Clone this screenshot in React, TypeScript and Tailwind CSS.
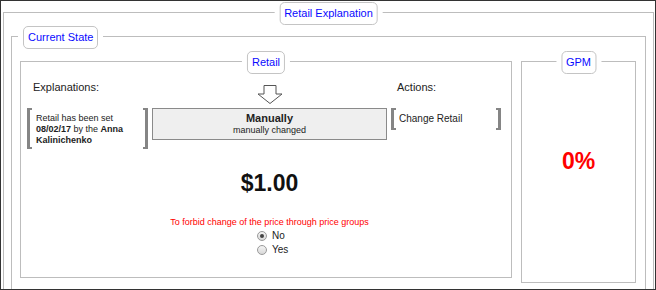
import React from 'react'

const font = "font-['Liberation_Sans',Arial,sans-serif]"

function Legend({
  children,
  className,
}: {
  children: React.ReactNode
  className: string
}) {
  return (
    <div className={`absolute top-[-11px] bg-white px-[5px] ${className}`}>
      <div className="flex h-[23px] items-center rounded-[5px] border border-[#c4c4c4] bg-white px-[4px] text-[11px] leading-none text-[#0a0aff]">
        {children}
      </div>
    </div>
  )
}

function Bracket({ side }: { side: 'left' | 'right' }) {
  return (
    <div
      className={`w-[5px] shrink-0 self-stretch border-y-[2px] border-[#858585] ${
        side === 'left' ? 'border-l-[3px]' : 'border-r-[3px]'
      }`}
    />
  )
}

function DownArrow() {
  return (
    <svg
      width="26"
      height="21"
      viewBox="0 0 26 21"
      className="mt-[3px]">
      <path
        d="M7 1.5 H19 V10 H25 L13 19.5 L1 10 H7 Z"
        fill="#fff"
        stroke="#555"
        strokeWidth="1"
        strokeLinejoin="miter"
      />
    </svg>
  )
}

function Radio({ checked, label }: { checked?: boolean; label: string }) {
  return (
    <div className="flex h-[14px] items-center gap-[5px]">
      <span className="flex h-[10px] w-[10px] items-center justify-center rounded-full border border-[#9a9a9a] bg-gradient-to-b from-[#f4f4f4] to-[#d8d8d8]">
        {checked && <span className="h-[4px] w-[4px] rounded-full bg-[#444]" />}
      </span>
      <span className="text-[10px] leading-none text-[#222]">{label}</span>
    </div>
  )
}

export default function App() {
  return (
    <div
      className={`h-[290px] w-[656px] overflow-hidden border border-[#333] bg-white ${font}`}>
      {/* Retail Explanation */}
      <div className="relative ml-[2px] mr-[1px] mt-[11px] border border-[#bdbdbd] pb-[10px]">
        <Legend className="left-1/2 -translate-x-1/2">Retail Explanation</Legend>

        {/* Current State */}
        <div className="relative ml-[7px] mr-[7px] mt-[23px] border border-[#bdbdbd] pb-[20px]">
          <Legend className="left-[6px]">Current State</Legend>

          <div className="ml-[8px] mr-[9px] mt-[24px] flex items-start gap-[9px]">
            {/* Retail */}
            <div className="relative h-[217px] w-[492px] shrink-0 border border-[#bdbdbd]">
              <Legend className="left-1/2 -translate-x-1/2">Retail</Legend>

              <div className="ml-[6px] mt-[19px] flex h-[27px] items-start gap-[4px]">
                <div className="w-[121px] pl-[6px] text-[11px] leading-[13px] text-[#222]">
                  Explanations:
                </div>
                <div className="flex w-[235px] justify-center">
                  <DownArrow />
                </div>
                <div className="w-[110px] pl-[6px] text-[11px] leading-[13px] text-[#222]">
                  Actions:
                </div>
              </div>

              <div className="ml-[6px] flex items-start gap-[4px]">
                <div className="flex h-[41px] w-[121px]">
                  <Bracket side="left" />
                  <div className="flex-1 self-center pl-[4px] pt-[1px] text-[9px] leading-[11px] text-[#222]">
                    Retail has been set <b>08/02/17</b> by the{' '}
                    <b>Anna Kalinichenko</b>
                  </div>
                  <Bracket side="right" />
                </div>
                <div className="flex h-[32px] w-[235px] flex-col items-center justify-center border border-[#8a8a8a] bg-[#efefef] text-[#222]">
                  <div className="text-[11px] font-bold leading-[13px]">
                    Manually
                  </div>
                  <div className="text-[9px] leading-[11px]">
                    manually changed
                  </div>
                </div>
                <div className="flex h-[22px] w-[110px]">
                  <Bracket side="left" />
                  <div className="flex-1 self-center pl-[3px] text-[10px] leading-[12px] text-[#222]">
                    Change Retail
                  </div>
                  <Bracket side="right" />
                </div>
              </div>

              <div className="ml-[131px] mt-[23px] w-[235px]">
                <div className="text-center text-[23px] font-bold leading-[23px] text-[#111]">
                  $1.00
                </div>
                <div className="mt-[22px] text-center text-[9px] leading-[11px] text-[#ff0000]">
                  To forbid change of the price through price groups
                </div>
                <div className="ml-[105px] mt-[1px] flex flex-col">
                  <Radio checked label="No" />
                  <Radio label="Yes" />
                </div>
              </div>
            </div>

            {/* GPM */}
            <div className="relative h-[222px] w-[115px] shrink-0 border border-[#bdbdbd]">
              <Legend className="left-1/2 -translate-x-1/2">GPM</Legend>
              <div className="pt-[88px] text-center text-[23px] font-bold leading-[23px] text-[#ff0000]">
                0%
              </div>
            </div>
          </div>
        </div>
      </div>
    </div>
  )
}
